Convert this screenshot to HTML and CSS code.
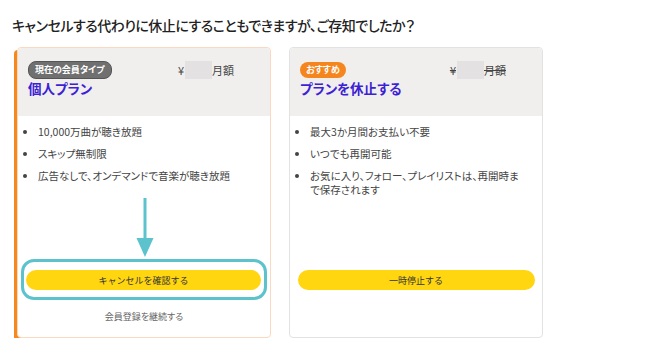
FILE: index.html
```html
<!DOCTYPE html>
<html lang="ja">
<head>
  <meta charset="UTF-8">
  <meta name="viewport" content="width=device-width, initial-scale=1.0">
  <title>休止のご案内</title>
  <link rel="stylesheet" href="styles.css">
</head>
<body>
  <div class="page">
    <h2 class="headline">キャンセルする代わりに休止にすることもできますが、ご存知でしたか？</h2>
    <div class="plans">
      <div class="plan current">
        <div class="plan-head">
          <div class="head-row">
            <span class="badge gray">現在の会員タイプ</span>
            <span class="price">¥<span class="blur"></span>月額</span>
          </div>
          <div class="plan-name">個人プラン</div>
        </div>
        <div class="plan-body">
          <ul class="features">
            <li>10,000万曲が聴き放題</li>
            <li>スキップ無制限</li>
            <li>広告なしで、オンデマンドで音楽が聴き放題</li>
          </ul>
          <div class="arrow">
            <svg width="18" height="60" viewBox="0 0 18 60">
              <line x1="9" y1="0" x2="9" y2="46" stroke="#5cc3cc" stroke-width="3"/>
              <polygon points="0.5,40 17.5,40 9,59" fill="#5cc3cc"/>
            </svg>
          </div>
          <div class="focus-ring">
            <button class="btn">キャンセルを確認する</button>
          </div>
          <div class="keep">会員登録を継続する</div>
        </div>
      </div>
      <div class="plan">
        <div class="plan-head">
          <div class="head-row">
            <span class="badge orange">おすすめ</span>
            <span class="price old">¥<span class="blur"></span>月額</span>
          </div>
          <div class="plan-name">プランを休止する</div>
        </div>
        <div class="plan-body">
          <ul class="features">
            <li>最大3か月間お支払い不要</li>
            <li>いつでも再開可能</li>
            <li>お気に入り、フォロー、プレイリストは、再開時まで保存されます</li>
          </ul>
          <div class="spacer"></div>
          <button class="btn wide">一時停止する</button>
        </div>
      </div>
    </div>
  </div>
</body>
</html>
```

FILE: styles.css
```css
body { margin: 0; background: #fff; font-family: "Noto Sans CJK JP", "Liberation Sans", sans-serif; color: #222; font-feature-settings: "palt"; }
.page { padding: 14px 0 0 12px; }
.headline { margin: 0; font-size: 14px; font-weight: 500; line-height: 22px; color: #222; letter-spacing: -0.5px; }
.plans { display: flex; gap: 18px; margin-top: 11px; padding-left: 5px; }
.plan { width: 252px; height: 289px; border: 1px solid #e2e2e2; border-radius: 4px; display: flex; flex-direction: column; overflow: hidden; background: #fff; }
.plan.current { border-color: #fbd8c0; box-shadow: -3px 3px 0 #f7881e; overflow: visible; }
.plan-head { background: #f1efee; height: 68px; padding: 13px 10px 0 10px; box-sizing: border-box; border-radius: 4px 4px 0 0; }
.head-row { display: flex; justify-content: space-between; align-items: center; padding-right: 26px; }
.badge { font-size: 9px; font-weight: bold; color: #fff; padding: 1px 6px; border-radius: 8px; line-height: 14px; }
.badge.gray { background: #707070; border: 1px solid #555; }
.badge.orange { background: #f5861f; }
.price { font-size: 11px; color: #444; display: flex; align-items: center; }
.price.old { text-decoration: line-through; }
.blur { display: inline-block; width: 27px; height: 18px; background: #e3e1e1; margin: 0 0 0 1px; }
.plan-name { margin-top: 0; font-size: 13.5px; font-weight: bold; color: #3d1fd4; line-height: 18px; }
.plan-body { flex: 1; display: flex; flex-direction: column; padding: 1px 0 0 0; }
.features { margin: 0; padding: 0 16px 0 20px; font-size: 10.5px; color: #444; line-height: 14px; }
.features li { margin: 8px 0; }
.arrow { display: flex; justify-content: center; margin-top: 7px; height: 60px; padding-left: 2px; }
.focus-ring { margin: 1px 3px 0 3px; border: 3px solid #5cc3cc; border-radius: 13px; padding: 8px 3px 7px 2px; }
.btn { display: block; width: 100%; height: 20px; border: none; border-radius: 10px; background: #ffd610; font-family: inherit; font-size: 9px; color: #333; cursor: pointer; }
.btn.wide { margin: 0 auto; width: 237px; }
.keep { text-align: center; font-size: 9px; color: #666; margin-top: 10px; }
.spacer { height: 65px; }
```
